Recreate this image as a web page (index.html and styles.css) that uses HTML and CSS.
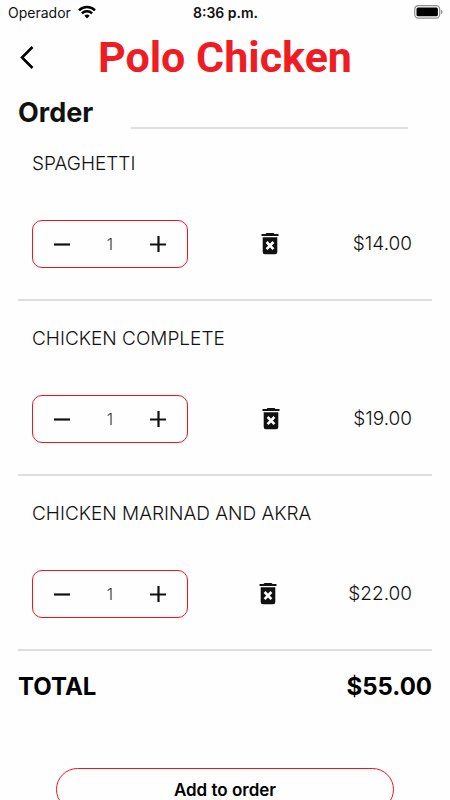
FILE: index.html
```html
<!DOCTYPE html>
<html lang="en">
<head>
<meta charset="utf-8">
<meta name="viewport" content="width=device-width, initial-scale=1">
<title>Polo Chicken</title>
<link rel="stylesheet" href="styles.css">
</head>
<body>
<svg class="sprite" aria-hidden="true">
  <symbol id="minus" viewBox="0 0 18 18"><path d="M1 9.500h16" stroke="currentColor" stroke-width="2.200"/></symbol>
  <symbol id="plus" viewBox="0 0 18 18"><path d="M1 9.500h16M9.500 1v16" stroke="currentColor" stroke-width="2.200"/></symbol>
  <symbol id="trash" viewBox="0 0 18 22"><path fill="currentColor" d="M5.500 0h7l1 1H17.500v2H.5V1h4zM1.700 4.200h14.600v14.800a2.200 2.200 0 0 1-2.200 2.200H3.900A2.200 2.200 0 0 1 1.700 19z"/><path d="M5.600 9l6.800 7.200M12.400 9l-6.800 7.200" stroke="#fff" stroke-width="2.600"/></symbol>
</svg>
<div class="status">
  <div class="carrier"><span>Operador</span>
    <svg width="18" height="14" viewBox="0 0 18 14" fill="none" stroke="#000" stroke-width="2.500"><path d="M1 5.300a11.300 11.300 0 0 1 16 0"/><path d="M3.900 8.300a7.200 7.200 0 0 1 10.200 0"/><path d="M9 13.500l-2.600-2.700a3.700 3.700 0 0 1 5.200 0z" fill="#000" stroke="none"/></svg>
  </div>
  <div class="time">8:36 p.m.</div>
  <svg class="battery" width="30" height="14" viewBox="0 0 30 14"><rect x="1.700" y=".7" width="25" height="12.400" rx="3.600" fill="none" stroke="#8e8e90" stroke-width="1.200"/><rect x="3.500" y="2.500" width="21.400" height="8.800" rx="1.500" fill="#000"/><path d="M28 4.800v4.400q1.500-.6 1.500-2.200t-1.500-2.200z" fill="#8e8e90"/></svg>
</div>
<header class="header">
  <button class="back" aria-label="Back"><svg width="14" height="24" viewBox="0 0 14 24" fill="none" stroke="#000" stroke-width="2.600"><path d="M12.500 2L2 12.500l10.500 10.500"/></svg></button>
  <h1>Polo Chicken</h1>
</header>
<main>
  <div class="order">
    <label for="order-name">Order</label>
    <input id="order-name" type="text">
  </div>
  <ul class="items">
    <li class="item">
      <h2>SPAGHETTI</h2>
      <div class="row">
        <div class="stepper"><button aria-label="Decrease"><svg><use href="#minus"/></svg></button><output>1</output><button aria-label="Increase"><svg><use href="#plus"/></svg></button></div>
        <button class="remove" aria-label="Remove"><svg><use href="#trash"/></svg></button>
        <span class="price">$14.00</span>
      </div>
    </li>
    <li class="item">
      <h2>CHICKEN COMPLETE</h2>
      <div class="row">
        <div class="stepper"><button aria-label="Decrease"><svg><use href="#minus"/></svg></button><output>1</output><button aria-label="Increase"><svg><use href="#plus"/></svg></button></div>
        <button class="remove" aria-label="Remove"><svg><use href="#trash"/></svg></button>
        <span class="price">$19.00</span>
      </div>
    </li>
    <li class="item">
      <h2>CHICKEN MARINAD AND AKRA</h2>
      <div class="row">
        <div class="stepper"><button aria-label="Decrease"><svg><use href="#minus"/></svg></button><output>1</output><button aria-label="Increase"><svg><use href="#plus"/></svg></button></div>
        <button class="remove" aria-label="Remove"><svg><use href="#trash"/></svg></button>
        <span class="price">$22.00</span>
      </div>
    </li>
  </ul>
  <div class="total"><span>TOTAL</span><span>$55.00</span></div>
  <button class="add">Add to order</button>
</main>
</body>
</html>
```
FILE: styles.css
```css
* { box-sizing: border-box; }
body {
  margin: 0;
  background: #fefefe;
  color: #111;
  font-family: Inter, "Liberation Sans", sans-serif;
}
button {
  display: flex;
  align-items: center;
  justify-content: center;
  padding: 0;
  border: 0;
  background: none;
  color: inherit;
  font: inherit;
  cursor: pointer;
}
.sprite { display: none; }
.status {
  display: grid;
  grid-template-columns: 1fr auto 1fr;
  align-items: center;
  height: 24px;
  padding: 0 7px 0 8px;
  font-size: 14px;
}
.carrier { display: flex; align-items: center; gap: 7px; }
.time { font-weight: 600; }
.battery { justify-self: end; }
.header {
  display: grid;
  grid-template-columns: 40px 1fr 40px;
  align-items: center;
  height: 66px;
  padding: 0 7px;
}
h1 {
  margin: 0;
  color: #ef1c24;
  font: bold 43px/66px Roboto, sans-serif;
  text-align: center;
}
main { padding: 0 18px 24px; }
.order {
  display: flex;
  gap: 38px;
  height: 39px;
  padding-right: 24px;
}
.order label { font-size: 27px; font-weight: 700; line-height: 46px; }
.order input {
  flex: 1;
  min-width: 0;
  padding: 0;
  border: 0;
  border-bottom: 2px solid #dedede;
  outline: 0;
  background: none;
  font: inherit;
}
.items {
  display: grid;
  gap: 3px;
  margin: 0;
  padding: 0;
  list-style: none;
}
.item {
  padding: 23px 20px 31px 14px;
  border-bottom: 2px solid #dedede;
}
h2 {
  margin: 0 0 44px;
  font-size: 19px;
  font-weight: 300;
  line-height: 24px;
}
.row { display: flex; align-items: center; justify-content: space-between; }
.stepper {
  display: flex;
  align-items: center;
  justify-content: space-between;
  width: 156px;
  height: 48px;
  padding: 0 20px;
  border: 1px solid #f0141c;
  border-radius: 10px;
}
.stepper button, .stepper svg { width: 18px; height: 18px; }
output { color: #333; font-size: 16px; font-weight: 300; }
.remove svg { width: 18px; height: 22px; }
.price { font-size: 19px; font-weight: 300; line-height: 24px; }
.total {
  display: flex;
  justify-content: space-between;
  margin: 20px 0 65px;
  color: #000;
  font-size: 24px;
  font-weight: 700;
  line-height: 32px;
}
.add {
  width: calc(100% - 76px);
  height: 43px;
  margin: 0 auto;
  border: 1px solid #f0141c;
  border-radius: 22px;
  color: #000;
  font-size: 17px;
  font-weight: 600;
  line-height: 20px;
}
```
